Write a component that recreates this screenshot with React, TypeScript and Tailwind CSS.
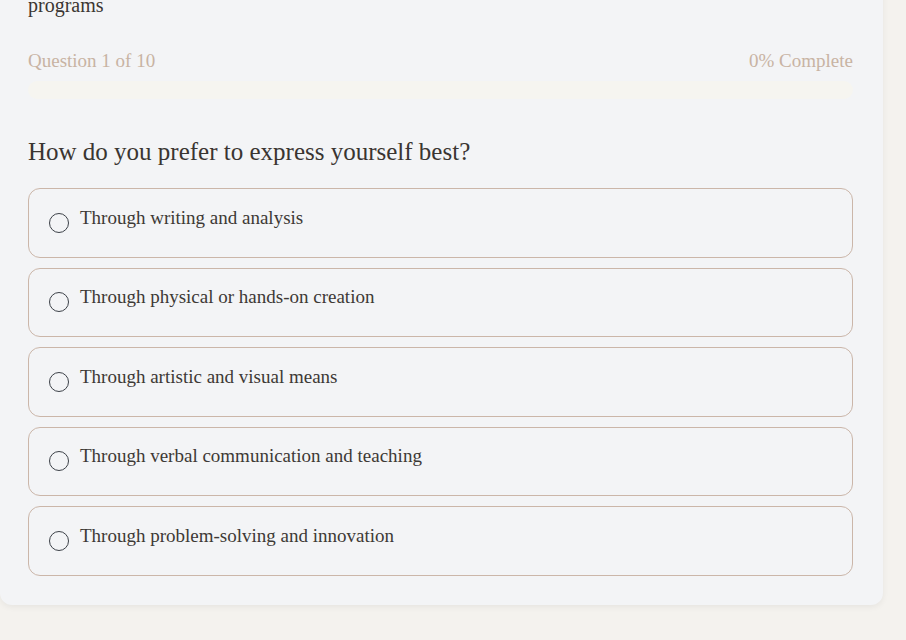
import React from "react";

const options = [
  "Through writing and analysis",
  "Through physical or hands-on creation",
  "Through artistic and visual means",
  "Through verbal communication and teaching",
  "Through problem-solving and innovation",
];

export default function App() {
  return (
    <div
      className="h-[640px] w-[906px] overflow-hidden bg-[#f4f2ee]"
      style={{ fontFamily: '"Liberation Serif", "DejaVu Serif", serif' }}
    >
      <div className="w-[883px] rounded-b-xl bg-[#f3f4f6] pb-[29px] pl-7 pr-[30px] shadow-[0_2px_6px_rgba(0,0,0,0.06)]">
        <p className="-mt-[7px] text-[20px] leading-[24px] text-[#3b3632]">programs</p>
        <div className="mt-[32px] flex items-center justify-between text-[19px] leading-[24px] text-[#c8b3a3]">
          <span>Question 1 of 10</span>
          <span>0% Complete</span>
        </div>
        <div className="mt-[8px] h-[18px] w-full rounded-full bg-[#f6f5f0]" />
        <h2 className="mt-[37px] text-[25px] leading-[32px] text-[#3a3531]">
          How do you prefer to express yourself best?
        </h2>
        <div className="mt-[20px] flex flex-col gap-[10px]">
          {options.map((o) => (
            <label
              key={o}
              className="flex h-[69.5px] items-center gap-[11px] rounded-xl border border-[#cbb6a9] px-[20px]"
            >
              <span className="block h-[20px] w-[20px] shrink-0 rounded-full border-[1.5px] border-[#3c4148]" />
              <span className="-mt-[10px] text-[19px] leading-[24px] text-[#3d3935]">{o}</span>
            </label>
          ))}
        </div>
      </div>
    </div>
  );
}
